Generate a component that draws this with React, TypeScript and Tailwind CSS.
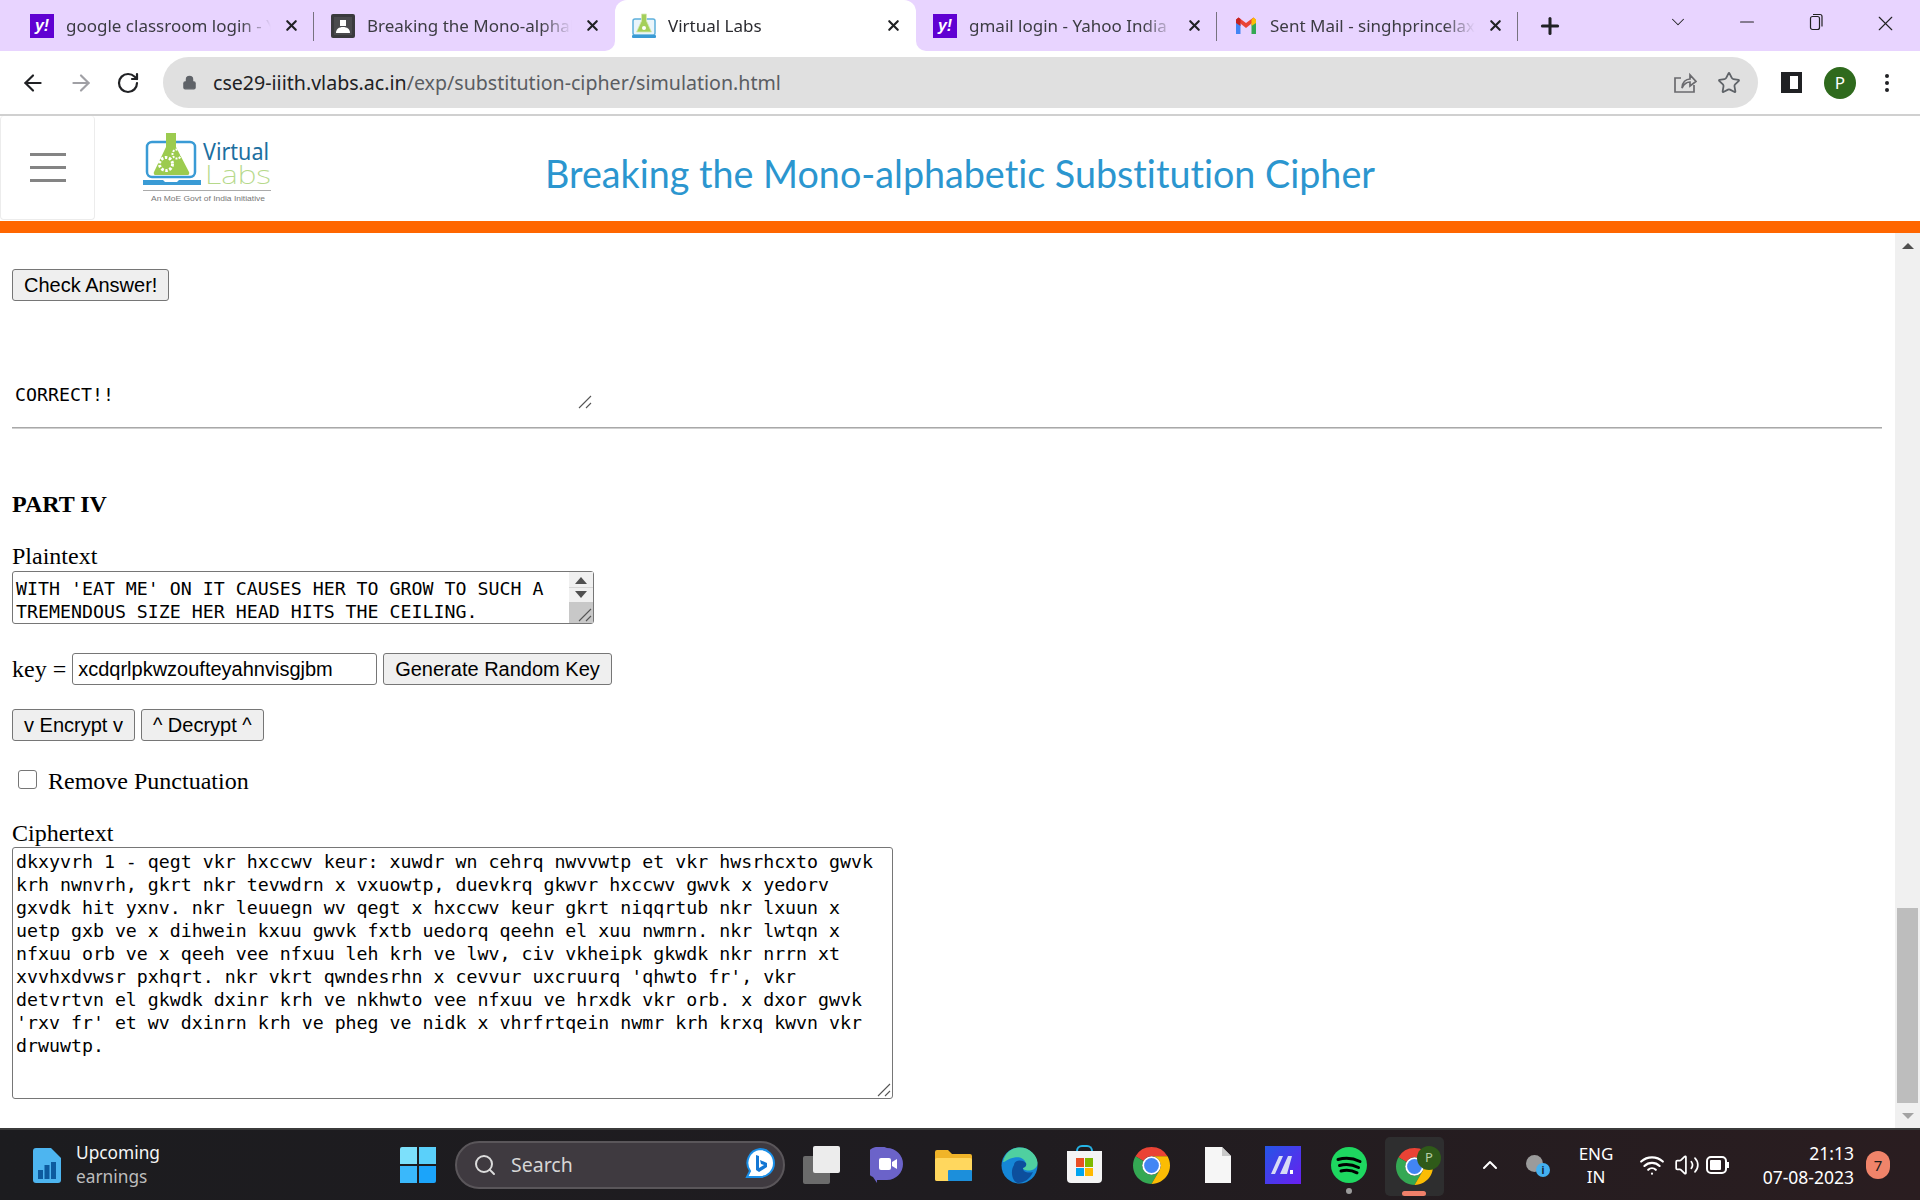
import { ArrowLeft, ArrowRight, ChevronDown, ChevronUp, Lock, Minus, Plus, RotateCw, Search, Star, Volume2, Wifi, X } from 'lucide-react';

const uiFont = "font-['Noto_Sans',sans-serif]";
const timesFont = "font-['Liberation_Serif',serif]";
const arialFont = "font-['Liberation_Sans',sans-serif]";
const monoFont = "font-['DejaVu_Sans_Mono',monospace]";

const cipherText = `dkxyvrh 1 - qegt vkr hxccwv keur: xuwdr wn cehrq nwvvwtp et vkr hwsrhcxto gwvk
krh nwnvrh, gkrt nkr tevwdrn x vxuowtp, duevkrq gkwvr hxccwv gwvk x yedorv
gxvdk hit yxnv. nkr leuuegn wv qegt x hxccwv keur gkrt niqqrtub nkr lxuun x
uetp gxb ve x dihwein kxuu gwvk fxtb uedorq qeehn el xuu nwmrn. nkr lwtqn x
nfxuu orb ve x qeeh vee nfxuu leh krh ve lwv, civ vkheipk gkwdk nkr nrrn xt
xvvhxdvwsr pxhqrt. nkr vkrt qwndesrhn x cevvur uxcruurq 'qhwto fr', vkr
detvrtvn el gkwdk dxinr krh ve nkhwto vee nfxuu ve hrxdk vkr orb. x dxor gwvk
'rxv fr' et wv dxinrn krh ve pheg ve nidk x vhrfrtqein nwmr krh krxq kwvn vkr
drwuwtp.`;

function YahooIcon() {
  return (
    <div className="w-6 h-6 bg-[#6001d2] flex items-center justify-center text-white font-['Liberation_Sans',sans-serif] font-bold text-[16px] italic">
      y!
    </div>
  );
}

function ClassroomIcon() {
  return (
    <svg width="24" height="24" viewBox="0 0 24 24">
      <rect width="24" height="24" rx="2" fill="#3a3a3d" />
      <rect x="3" y="3" width="18" height="18" fill="#4a4a4d" />
      <rect x="9" y="6" width="6" height="6" fill="#fff" />
      <path d="M5 19c0-4 3-6 7-6s7 2 7 6z" fill="#fff" />
    </svg>
  );
}

function VlabsFavicon() {
  return (
    <svg width="24" height="26" viewBox="0 0 24 26">
      <rect x="1" y="6" width="22" height="16" rx="2" fill="#eaf5fb" stroke="#5eb0dc" strokeWidth="1.5" />
      <path d="M9.500 1h5v7l5 11h-15l5-11z" fill="#a4cf5a" stroke="#d7e8b5" strokeWidth="0.8" />
      <circle cx="12" cy="15" r="2" fill="#fff" />
      <rect x="0" y="22" width="24" height="3" rx="1" fill="#3a9bd5" />
    </svg>
  );
}

function GmailIcon() {
  return (
    <svg width="24" height="24" viewBox="0 0 24 24">
      <path d="M2 6v14h4.500V10z" fill="#4285f4" />
      <path d="M22 6v14h-4.500V10z" fill="#34a853" />
      <path d="M2 6l10 8 10-8-2.500-2.500L12 9 4.500 3.500z" fill="#ea4335" />
      <path d="M17.500 5.500l2-2L22 5.500V9l-4.500 3z" fill="#fbbc04" />
      <path d="M2 5.500l2.500-2L6.500 5v7L2 9z" fill="#c5221f" />
    </svg>
  );
}

function ChromeIcon() {
  return (
    <svg width="37" height="37" viewBox="4 4 40 40">
      <path fill="#EA4335" d="M24 4A20 20 0 0 1 41.32 14H24A10 10 0 0 0 15.34 19L6.68 14A20 20 0 0 1 24 4Z" />
      <path fill="#34A853" d="M6.68 14A20 20 0 0 0 24 44L32.66 29A10 10 0 0 1 15.34 19Z" />
      <path fill="#FBBC04" d="M41.32 14A20 20 0 0 1 24 44L32.66 29A10 10 0 0 0 24 14Z" />
      <circle cx="24" cy="24" r="10" fill="#fff" />
      <circle cx="24" cy="24" r="8" fill="#4285F4" />
    </svg>
  );
}

function Grip() {
  return (
    <svg width="14" height="14" viewBox="0 0 14 14" className="absolute right-[2px] bottom-[2px]" stroke="#555" strokeWidth="1.100">
      <path d="M1 13L13 1M8 13l5-5" />
    </svg>
  );
}

function Tab({ icon, title, active, divider }: { icon: React.ReactNode; title: string; active?: boolean; divider?: boolean }) {
  return (
    <div className={`w-[301px] h-[51px] shrink-0 flex items-center pl-[17px] pr-[14px] gap-[12px] relative ${active ? 'bg-white rounded-t-[12px]' : ''}`}>
      {active && (
        <>
          <div className="absolute -left-[10px] bottom-0 w-[10px] h-[10px] bg-white">
            <div className="w-full h-full bg-[#e8d4ff] rounded-br-[10px]" />
          </div>
          <div className="absolute -right-[10px] bottom-0 w-[10px] h-[10px] bg-white">
            <div className="w-full h-full bg-[#e8d4ff] rounded-bl-[10px]" />
          </div>
        </>
      )}
      <div className="w-6 h-6 flex items-center justify-center shrink-0">{icon}</div>
      <div className="flex-1 overflow-hidden whitespace-nowrap text-[17px] text-[#3c3c43] [mask-image:linear-gradient(to_right,black_85%,transparent)]">
        {active ? <span className="text-[#2b2b30]">{title}</span> : title}
      </div>
      <X size={17} strokeWidth={3} className="text-[#202124] shrink-0" />
      {divider && <div className="absolute right-0 top-[12px] h-[29px] w-px bg-[#77727f]" />}
    </div>
  );
}

function TabStrip() {
  return (
    <div className={`h-[51px] bg-[#e8d4ff] flex items-stretch pl-[13px] ${uiFont}`}>
      <Tab icon={<YahooIcon />} title="google classroom login - Yahoo" divider />
      <Tab icon={<ClassroomIcon />} title="Breaking the Mono-alphabetic" />
      <Tab icon={<VlabsFavicon />} title="Virtual Labs" active />
      <Tab icon={<YahooIcon />} title="gmail login - Yahoo India" divider />
      <Tab icon={<GmailIcon />} title="Sent Mail - singhprincelaxman" divider />
      <div className="w-[64px] flex items-center justify-center">
        <Plus size={26} strokeWidth={2.800} className="text-[#202124]" />
      </div>
      <div className="flex-1 flex items-start justify-end pt-[11px] pr-[22px] text-[#222]">
        <ChevronDown size={22} strokeWidth={1.100} className="mr-[47px]" />
        <Minus size={22} strokeWidth={1.300} className="mr-[48px]" />
        <svg width="20" height="22" viewBox="0 0 20 22" fill="none" stroke="#222" strokeWidth="1.200" className="mr-[47px]">
          <rect x="4.500" y="5.500" width="9" height="13" rx="2" />
          <path d="M7 3.500h7a2 2 0 0 1 2 2v10" />
        </svg>
        <X size={25} strokeWidth={1.100} />
      </div>
    </div>
  );
}

function Toolbar() {
  return (
    <div className={`h-[63px] bg-white flex items-center border-b-2 border-[#d0d0d0] box-content ${uiFont}`}>
      <div className="w-[163px] flex items-center pl-[20px] gap-[22px] shrink-0">
        <ArrowLeft size={26} strokeWidth={2} className="text-[#202124]" />
        <ArrowRight size={26} strokeWidth={2} className="text-[#a0a0a5]" />
        <RotateCw size={24} strokeWidth={2.200} className="text-[#202124]" />
      </div>
      <div className="w-[1595px] h-[51px] rounded-full bg-[#e0e0e0] flex items-center pl-[19px] pr-[17px]">
        <Lock size={15} fill="#5f6368" strokeWidth={2} className="text-[#5f6368]" />
        <div className="ml-[16px] text-[19.6px] flex-1 text-[#5a5d62] whitespace-nowrap pt-px">
          <span className="text-[#202124]">cse29-iiith.vlabs.ac.in</span>/exp/substitution-cipher/simulation.html
        </div>
        <svg width="24" height="26" viewBox="0 0 24 26" fill="none" stroke="#6a6a6e" strokeWidth="1.700" className="mr-[20px]">
          <path d="M21 15v7H2V8h6" />
          <path d="M9 18c0-6 4-9 8-9V5l6 6.500L17 16v-4c-3 0-6 2-8 6z" />
        </svg>
        <Star size={24} strokeWidth={1.800} className="text-[#5f6368]" />
      </div>
      <div className="flex items-center pl-[23px]">
        <div className="w-[21px] h-[21px] border-[4px] border-[#202124] border-l-[9px] bg-white" />
        <div className="w-8 h-8 rounded-full bg-[#2f6a1d] text-white flex items-center justify-center text-[17px] ml-[22px]">P</div>
        <div className="flex flex-col gap-[3px] ml-[29px]">
          <div className="w-1 h-1 rounded-full bg-[#202124]" />
          <div className="w-1 h-1 rounded-full bg-[#202124]" />
          <div className="w-1 h-1 rounded-full bg-[#202124]" />
        </div>
      </div>
    </div>
  );
}

function SiteHeader() {
  return (
    <div className="border-b-[12px] border-[#ff6600] box-content h-[105px] flex bg-white">
      <div className="w-[95px] h-[104px] border border-t-0 border-[#ececec] rounded-[4px] flex flex-col items-center justify-center gap-[10px] shrink-0">
        <div className="w-[36px] h-[3px] bg-[#848484]" />
        <div className="w-[36px] h-[3px] bg-[#848484]" />
        <div className="w-[36px] h-[3px] bg-[#848484]" />
      </div>
      <svg width="132" height="72" viewBox="0 0 132 72" className="ml-[47px] mt-[17px] shrink-0">
        <rect x="5" y="9" width="48" height="35" rx="5" fill="none" stroke="#3a9bd5" strokeWidth="2.500" />
        <path d="M24 0h10v14l13 25a2 2 0 0 1-2 3H14a2 2 0 0 1-2-3l12-25z" fill="#9ccb4f" />
        <circle cx="24" cy="31" r="6.500" fill="none" stroke="#fff" strokeWidth="3" strokeDasharray="2.500 1.600" />
        <circle cx="35" cy="21" r="4.500" fill="none" stroke="#fff" strokeWidth="2" strokeDasharray="2 1.200" />
        <path d="M1 47h20l2 2h12l2-2h22v5H1z" fill="#3a9bd5" />
        <text x="61" y="27" fontFamily="'Noto Sans', sans-serif" fontSize="23" fill="#1c6f9f" textLength="66" lengthAdjust="spacingAndGlyphs">Virtual</text>
        <text x="63" y="51" fontFamily="'Noto Sans', sans-serif" fontSize="25" fontWeight="200" fill="#b6d98a" textLength="66" lengthAdjust="spacingAndGlyphs">Labs</text>
        <rect x="1" y="57" width="128" height="1" fill="#aaa" />
        <text x="9" y="68" fontFamily="'Liberation Sans', sans-serif" fontSize="8" fill="#777" textLength="114" lengthAdjust="spacingAndGlyphs">An MoE Govt of India Initiative</text>
      </svg>
      <h1 className="ml-[271px] mt-[35px] text-[37.7px] leading-[46px] text-[#2b96cf] whitespace-nowrap font-['Lato',sans-serif] [font-variant-ligatures:none]">
        Breaking the Mono-alphabetic Substitution Cipher
      </h1>
    </div>
  );
}

function FormButton({ label, className = '' }: { label: string; className?: string }) {
  return (
    <button className={`h-8 px-[11px] rounded-[3px] border border-[#767676] bg-[#efefef] text-[20px] leading-none text-black whitespace-nowrap ${arialFont} ${className}`}>
      {label}
    </button>
  );
}

function ScrollTrack() {
  return (
    <div className="w-[25px] shrink-0 bg-[#f0f0f0] flex flex-col items-center">
      <div className="h-[25px] flex items-center justify-center">
        <div className="w-0 h-0 border-x-[6px] border-x-transparent border-b-[6px] border-b-[#505050]" />
      </div>
      <div className="mt-[650px] w-[21px] h-[195px] bg-[#bdbdbd]" />
      <div className="h-[25px] flex items-center justify-center">
        <div className="w-0 h-0 border-x-[6px] border-x-transparent border-t-[6px] border-t-[#a3a3a3]" />
      </div>
    </div>
  );
}

function PageContent() {
  return (
    <div className="h-[895px] flex bg-white overflow-hidden">
      <div className={`flex-1 pl-3 pr-[13px] pt-[33px] text-black text-[24px] ${timesFont}`}>
        <FormButton label="Check Answer!" />
        <div className="relative w-[582px] mt-[79px]">
          <textarea
            readOnly
            defaultValue="CORRECT!!"
            className={`block w-full h-[30px] pl-[3px] pt-[2px] text-[18.25px] leading-[23px] outline-none overflow-hidden resize-none ${monoFont}`}
          />
          <Grip />
        </div>
        <div className="h-px bg-[#a8a8a8] mt-[16px] border-b border-[#d0d0d0] box-content" />
        <div className="mt-[61px] font-bold leading-[28px]">PART IV</div>
        <div className="mt-[24px] leading-[28px]">Plaintext</div>
        <div className="relative w-[582px] mt-[1px]">
          <textarea
            readOnly
            defaultValue={"WITH 'EAT ME' ON IT CAUSES HER TO GROW TO SUCH A\nTREMENDOUS SIZE HER HEAD HITS THE CEILING."}
            className={`block w-full h-[53px] pl-[3px] pt-[5px] border border-[#767676] rounded-[3px] text-[18.25px] leading-[23px] outline-none overflow-hidden resize-none whitespace-pre ${monoFont}`}
          />
          <div className="absolute right-px top-px bottom-px w-[24px] bg-[#f0f0f0] flex flex-col items-center">
            <div className="w-0 h-0 mt-[5px] border-x-[6px] border-x-transparent border-b-[7px] border-b-[#505050]" />
            <div className="w-full h-px bg-[#d6d6d6] my-[3px]" />
            <div className="w-0 h-0 border-x-[6px] border-x-transparent border-t-[7px] border-t-[#505050]" />
            <div className="w-full flex-1 mt-[4px] bg-[#c8c8c8]" />
          </div>
          <Grip />
        </div>
        <div className="mt-[29px] flex items-center h-8">
          <span className="leading-[32px]">key =</span>
          <input
            readOnly
            value="xcdqrlpkwzoufteyahnvisgjbm"
            className={`ml-[6px] w-[305px] h-8 px-[5px] border border-[#767676] rounded-[3px] text-[20px] outline-none ${arialFont}`}
          />
          <FormButton label="Generate Random Key" className="ml-[6px]" />
        </div>
        <div className="mt-6 flex gap-[6px]">
          <FormButton label="v Encrypt v" />
          <FormButton label="^ Decrypt ^" />
        </div>
        <div className="mt-[26px] flex items-center h-[28px]">
          <div className="ml-[6px] -mt-[4px] w-[19px] h-[19px] border border-[#767676] rounded-[3px] bg-white" />
          <span className="ml-[11px]">Remove Punctuation</span>
        </div>
        <div className="mt-[24px] leading-[28px]">Ciphertext</div>
        <div className="relative w-[881px]">
          <textarea
            readOnly
            defaultValue={cipherText}
            className={`block w-full h-[252px] pl-[3px] pt-[2px] border border-[#767676] rounded-[3px] text-[18.25px] leading-[23px] outline-none whitespace-pre overflow-hidden resize-none ${monoFont}`}
          />
          <Grip />
        </div>
      </div>
      <ScrollTrack />
    </div>
  );
}

function Taskbar() {
  return (
    <div className={`h-[72px] border-t-2 border-[#3b3b3b] bg-gradient-to-r from-[#1c1c1f] via-[#1f1c20] to-[#2a1d20] flex items-center text-white ${uiFont}`}>
      {/* widgets */}
      <svg width="28" height="35" viewBox="0 0 28 35" className="ml-[33px] shrink-0">
        <path d="M3 0h15l10 10v22a3 3 0 0 1-3 3H3a3 3 0 0 1-3-3V3a3 3 0 0 1 3-3z" fill="#4db5f0" />
        <rect x="5" y="22" width="5" height="9" fill="#0d5b9f" />
        <rect x="11.500" y="17" width="5" height="14" fill="#0d5b9f" />
        <rect x="18" y="14" width="5" height="17" fill="#0d5b9f" />
      </svg>
      <div className="ml-[15px] w-[324px] shrink-0 text-[17.3px] leading-[24px]">
        <div className="text-[#f5f5f5]">Upcoming</div>
        <div className="text-[#bdbdbd]">earnings</div>
      </div>
      {/* start */}
      <div className="grid grid-cols-2 gap-[2px] w-[36px] h-[36px] shrink-0">
        <div className="bg-[#7ce0fb] rounded-tl-[2px]" />
        <div className="bg-[#5ad0fa]" />
        <div className="bg-[#3ab8fb]" />
        <div className="bg-[#1ba4fa] rounded-br-[2px]" />
      </div>
      <div className="ml-[19px] w-[330px] h-[48px] rounded-full bg-[#3f3a40] border-2 border-[#5a565a] flex items-center pl-[16px] pr-[8px] shrink-0">
        <Search size={24} strokeWidth={2} className="text-[#dcdcdc]" />
        <span className="ml-[14px] text-[19.5px] text-[#d6d6d6] flex-1">Search</span>
        <svg width="30" height="34" viewBox="0 0 30 34">
          <path d="M15 1a14 14 0 0 1 0 28H2l3-6A14 14 0 0 1 15 1z" fill="#fff" stroke="#1a8fe8" strokeWidth="2" />
          <path d="M11 7l3 1v12l5-3-3-1-1-4 7 3v4l-8 5-3-2z" fill="#1477d4" />
        </svg>
      </div>
      {/* task view */}
      <div className="relative w-[37px] h-[38px] ml-[18px] shrink-0">
        <div className="absolute left-0 bottom-0 w-[27px] h-[28px] rounded-[2px] bg-[#6b6b6b]" />
        <div className="absolute right-0 top-0 w-[27px] h-[27px] rounded-[2px] bg-[#ececec]" />
      </div>
      <svg width="34" height="36" viewBox="0 0 34 36" className="ml-[30px] shrink-0">
        <path d="M17 1a16 16 0 0 1 0 32H7v3l-4-6A16 16 0 0 1 17 1z" fill="#6b63c9" />
        <rect x="9" y="11" width="12" height="12" rx="2" fill="#fff" />
        <path d="M22 15l5-3v10l-5-3z" fill="#fff" />
      </svg>
      <svg width="37" height="32" viewBox="0 0 37 32" className="ml-[31px] shrink-0">
        <path d="M0 3a2 2 0 0 1 2-2h11l4 4h18a2 2 0 0 1 2 2v23a2 2 0 0 1-2 2H2a2 2 0 0 1-2-2z" fill="#f0b429" />
        <rect x="0" y="9" width="37" height="23" rx="2" fill="#ffd75e" />
        <rect x="13" y="21" width="24" height="11" rx="1" fill="#1c8fdb" />
      </svg>
      <svg width="37" height="37" viewBox="0 0 37 37" className="ml-[29px] shrink-0">
        <circle cx="18.500" cy="18.500" r="18" fill="#1586d6" />
        <path d="M2 15C4 5 12 .5 19 .5c10 0 17 8 17.500 15 .3 5-4 8-9 8-3 0-6-1-6-3 3 0 4-2 3-5-1-4-6-6-11-5-6 1-10 5-11.500 4.500z" fill="#4fd0a0" />
        <path d="M13 18c0-5 8-6 12-2 1 3-1 4-3 5 0 5 6 5 10 4-3 7-9 11-15 11-6-1-8-12-4-18z" fill="#0c4f9d" />
      </svg>
      <div className="relative w-[35px] h-[38px] ml-[29px] shrink-0 mt-[-2px]">
        <div className="absolute left-[9px] top-0 w-[17px] h-[10px] rounded-t-[6px] border-2 border-b-0 border-[#25b4e6]" />
        <div className="absolute left-0 bottom-0 w-[35px] h-[32px] rounded-b-[4px] bg-[#f4f4f4] grid grid-cols-2 gap-px px-[9px] py-[7px]">
          <div className="bg-[#e94f25]" />
          <div className="bg-[#7eb900]" />
          <div className="bg-[#00a4ef]" />
          <div className="bg-[#ffb900]" />
        </div>
      </div>
      <div className="ml-[31px] shrink-0">
        <ChromeIcon />
      </div>
      <svg width="26" height="36" viewBox="0 0 26 36" className="ml-[35px] shrink-0">
        <path d="M0 0h17l9 9v27H0z" fill="#f6f6f6" />
        <path d="M17 0l9 9h-9z" fill="#c9c9c9" />
      </svg>
      <svg width="36" height="38" viewBox="0 0 36 38" className="ml-[34px] shrink-0">
        <defs>
          <linearGradient id="mapp" x1="0" y1="0" x2="1" y2="1">
            <stop offset="0" stopColor="#2456e6" />
            <stop offset="1" stopColor="#6a1ff0" />
          </linearGradient>
        </defs>
        <rect width="36" height="38" fill="url(#mapp)" />
        <path d="M6 28l8-18h4l-8 18zM15 28l8-18h4l-5 18z" fill="#d7dcf5" />
        <rect x="25" y="24" width="3" height="4" fill="#fff" />
      </svg>
      <div className="ml-[30px] shrink-0 w-[36px] h-[36px] relative flex justify-center">
        <svg width="36" height="36" viewBox="0 0 36 36">
          <circle cx="18" cy="18" r="18" fill="#1ed760" />
          <path d="M7 12.500c7-2 15-1.500 22 2M8.500 18.500c6-1.700 13-1 19 2M10 24c5-1.300 11-.8 16 1.800" fill="none" stroke="#000" strokeWidth="3" strokeLinecap="round" />
        </svg>
        <div className="absolute -bottom-[11px] w-[6px] h-[6px] rounded-full bg-[#9b9b9b]" />
      </div>
      <div className="ml-[18px] w-[59px] h-[59px] rounded-[5px] bg-[#2e2e2f] relative flex items-center justify-center shrink-0 self-center mt-[2px]">
        <ChromeIcon />
        <div className="absolute right-[3px] top-[9px] w-[24px] h-[24px] rounded-full bg-[#2f5a19] flex items-center justify-center text-[13px] text-[#b9cfa8]">P</div>
        <div className="absolute bottom-0 left-[17px] w-[24px] h-[5px] rounded-full bg-[#f0806a]" />
      </div>
      {/* tray */}
      <ChevronUp size={24} strokeWidth={2} className="ml-[34px] shrink-0" />
      <div className="relative ml-[24px] w-[24px] h-[24px] shrink-0">
        <div className="absolute left-0 top-[2px] w-[17px] h-[17px] rounded-full bg-[#9b9b9b]" />
        <div className="absolute right-0 bottom-0 w-[14px] h-[14px] rounded-full bg-[#43b0f0] text-[10px] leading-[14px] text-center text-[#123] font-bold">i</div>
      </div>
      <div className="ml-[26px] w-[40px] text-center text-[17px] leading-[23px] shrink-0">
        <div>ENG</div>
        <div>IN</div>
      </div>
      <Wifi size={26} strokeWidth={2} className="ml-[23px] shrink-0" />
      <Volume2 size={26} strokeWidth={1.600} className="ml-[9px] shrink-0" />
      <svg width="24" height="22" viewBox="0 0 24 22" fill="none" stroke="#fff" strokeWidth="2" className="ml-[6px] shrink-0">
        <rect x="1" y="3" width="19" height="16" rx="4" />
        <rect x="4" y="6" width="11" height="10" rx="1" fill="#fff" stroke="none" />
        <rect x="21" y="8" width="2" height="6" fill="#fff" stroke="none" />
      </svg>
      <div className="ml-auto text-right text-[17.5px] leading-[24px] shrink-0">
        <div>21:13</div>
        <div>07-08-2023</div>
      </div>
      <div className="ml-[12px] mr-[30px] w-6 h-[28px] rounded-full bg-[#f0846a] text-[#1c1c1c] flex items-center justify-center text-[15px] shrink-0">7</div>
    </div>
  );
}

export default function App() {
  return (
    <div className="w-[1920px] h-[1200px] overflow-hidden flex flex-col">
      <TabStrip />
      <Toolbar />
      <SiteHeader />
      <PageContent />
      <Taskbar />
    </div>
  );
}
